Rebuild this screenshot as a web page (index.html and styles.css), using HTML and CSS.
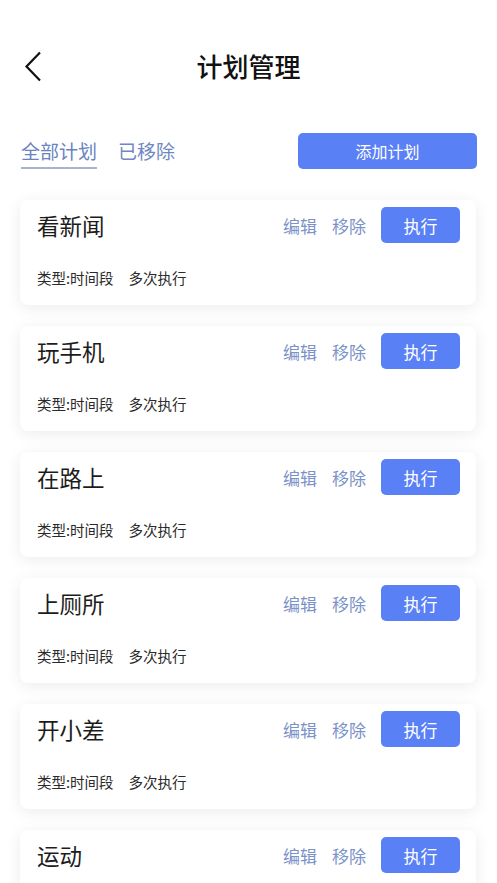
FILE: index.html
```html
<!DOCTYPE html>
<html lang="zh-CN">
<head>
    <meta charset="UTF-8" />
    <title>计划管理</title>
    <link rel="stylesheet" href="styles.css">
</head>
<body>
    <header class="topbar">
        <a class="back" href="#">
            <svg width="18" height="31" viewBox="0 0 18 31"><path d="M16 1.5 L2.5 15.5 L16 29.5" fill="none" stroke="#111" stroke-width="2.2"/></svg>
        </a>
        <h1 class="title">计划管理</h1>
    </header>

    <section class="toolbar">
        <nav class="tabs">
            <span class="tab active">全部计划</span>
            <span class="tab">已移除</span>
        </nav>
        <button class="btn add">添加计划</button>
    </section>

    <main class="plans">
        <div class="plan">
            <div class="plan-head">
                <span class="plan-name">看新闻</span>
                <a class="op">编辑</a><a class="op">移除</a>
                <button class="btn run">执行</button>
            </div>
            <p class="plan-meta">类型:时间段<span class="times">多次执行</span></p>
        </div>
        <div class="plan">
            <div class="plan-head">
                <span class="plan-name">玩手机</span>
                <a class="op">编辑</a><a class="op">移除</a>
                <button class="btn run">执行</button>
            </div>
            <p class="plan-meta">类型:时间段<span class="times">多次执行</span></p>
        </div>
        <div class="plan">
            <div class="plan-head">
                <span class="plan-name">在路上</span>
                <a class="op">编辑</a><a class="op">移除</a>
                <button class="btn run">执行</button>
            </div>
            <p class="plan-meta">类型:时间段<span class="times">多次执行</span></p>
        </div>
        <div class="plan">
            <div class="plan-head">
                <span class="plan-name">上厕所</span>
                <a class="op">编辑</a><a class="op">移除</a>
                <button class="btn run">执行</button>
            </div>
            <p class="plan-meta">类型:时间段<span class="times">多次执行</span></p>
        </div>
        <div class="plan">
            <div class="plan-head">
                <span class="plan-name">开小差</span>
                <a class="op">编辑</a><a class="op">移除</a>
                <button class="btn run">执行</button>
            </div>
            <p class="plan-meta">类型:时间段<span class="times">多次执行</span></p>
        </div>
        <div class="plan">
            <div class="plan-head">
                <span class="plan-name">运动</span>
                <a class="op">编辑</a><a class="op">移除</a>
                <button class="btn run">执行</button>
            </div>
        </div>
    </main>
</body>
</html>
```

FILE: styles.css
```css
html {
    background: #fff;
}

body {
    margin: 0;
    font-family: "Noto Sans CJK SC", "Noto Sans", sans-serif;
    color: #1a1a1a;
    overflow: hidden;
}

.topbar {
    position: relative;
    height: 44px;
    margin-top: 44px;
}

.back {
    position: absolute;
    left: 24px;
    top: 7px;
    display: block;
    line-height: 0;
}

.title {
    margin: 0;
    text-align: center;
    font-size: 26px;
    font-weight: 500;
    line-height: 44px;
    color: #111;
}

.toolbar {
    display: flex;
    justify-content: space-between;
    align-items: flex-start;
    margin-top: 45px;
    padding: 0 20px 0 21px;
}

.tabs {
    display: flex;
    gap: 21px;
    margin-top: 5px;
}

.tab {
    font-size: 19px;
    line-height: 26px;
    padding-bottom: 3px;
    color: #7088c2;
    border-bottom: 2px solid transparent;
}

.tab.active {
    color: #6883c0;
    border-bottom-color: #a6b4d0;
}

.btn {
    border: 0;
    border-radius: 5px;
    background: #5a80f5;
    color: #fff;
    font-family: inherit;
    cursor: pointer;
}

.btn.add {
    width: 179px;
    height: 36px;
    font-size: 16px;
}

.plans {
    padding: 31px 21px 0 20px;
    display: flex;
    flex-direction: column;
    gap: 21px;
}

.plan {
    background: #fff;
    border-radius: 8px;
    padding: 7px 16px 17px 17px;
    box-shadow: 0 3px 16px rgba(0, 0, 0, 0.08);
}

.plan-head {
    display: flex;
    align-items: center;
    height: 36px;
}

.plan-name {
    flex: 1;
    font-size: 22.5px;
    color: #1c1c1c;
}

.op {
    font-size: 17px;
    color: #7b92c8;
    margin-right: 15px;
}

.btn.run {
    width: 79px;
    height: 36px;
    font-size: 17px;
}

.plan-meta {
    margin: 25px 0 0;
    font-size: 14.5px;
    line-height: 20px;
    color: #2a2a2a;
}

.times {
    margin-left: 15px;
}
```
